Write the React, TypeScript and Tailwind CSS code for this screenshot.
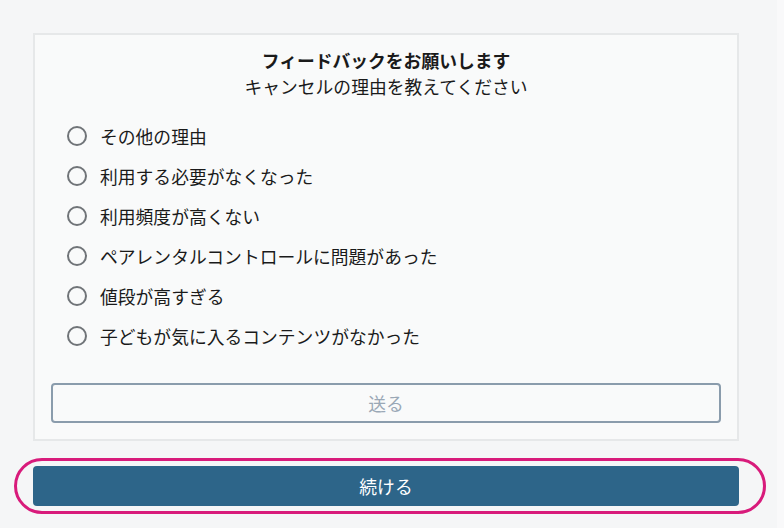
import React from "react";

const reasons = [
  "その他の理由",
  "利用する必要がなくなった",
  "利用頻度が高くない",
  "ペアレンタルコントロールに問題があった",
  "値段が高すぎる",
  "子どもが気に入るコンテンツがなかった",
];

export default function App() {
  return (
    <div
      className="flex w-[784px] h-[528px] bg-[#f5f6f7] text-[#1a1a1a] overflow-hidden"
      style={{ fontFamily: '"Noto Sans CJK JP", "Noto Sans", sans-serif' }}
    >
      <div className="flex-1 pt-[33px] pl-[33px]">
        <div className="w-[706px] border-2 border-[#e6e8e9] bg-[#f9fafa] pt-[12px] pb-[16px] px-[16px]">
          <div className="text-center text-[17.8px] leading-[26px] font-bold">
            フィードバックをお願いします
          </div>
          <div className="text-center text-[17.8px] leading-[26px]">
            キャンセルの理由を教えてください
          </div>
          <ul className="mt-[17px] pl-[16px]">
            {reasons.map((r) => (
              <li key={r} className="flex items-center h-[40px]">
                <span className="w-[20px] h-[20px] rounded-full border-2 border-[#707478] box-border" />
                <span className="ml-[13px] text-[17.8px] leading-[26px]">{r}</span>
              </li>
            ))}
          </ul>
          <button className="mt-[27px] w-full h-[40px] rounded-[4px] border-2 border-[#8a9cac] bg-[#f9fafa] text-[17.8px] text-[#9aa8b6] flex items-center justify-center">
            送る
          </button>
        </div>
        <div className="relative mt-[25px] w-[706px]">
          <button className="w-full h-[40px] rounded-[4px] bg-[#2d6589] text-white text-[17.8px] flex items-center justify-center">
            続ける
          </button>
          <span className="absolute top-[-8px] bottom-[-8px] left-[-19px] right-[-27px] rounded-full border-[3px] border-[#d81b7b] pointer-events-none" />
        </div>
      </div>
      <div className="w-[7px] h-full bg-[#f9f9fa]" />
    </div>
  );
}
